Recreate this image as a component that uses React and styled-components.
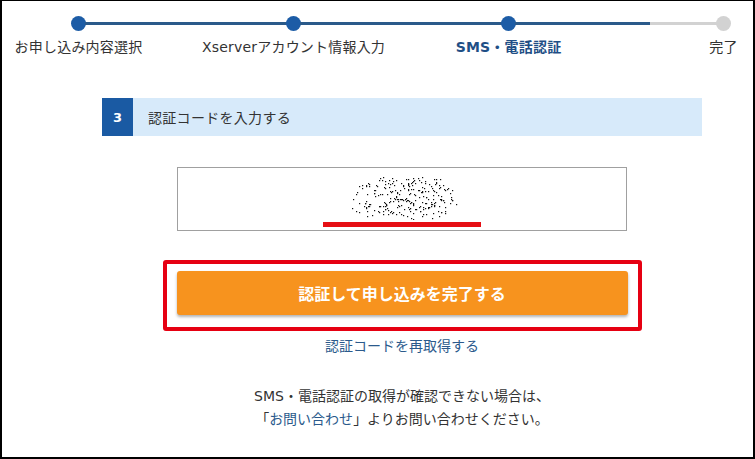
import React from "react";
import styled, { createGlobalStyle } from "styled-components";

const Global = createGlobalStyle`
  html, body { margin: 0; padding: 0; background: #fff; }
  body { font-family: "DejaVu Sans", "Noto Sans CJK JP", sans-serif; color: #333; }
  * { box-sizing: border-box; }
`;

const Frame = styled.div`
  width: 755px;
  height: 459px;
  border: 2px solid #000;
  border-top-width: 1px;
  border-left-width: 2px;
  background: #fff;
  overflow: hidden;
`;

const Stepper = styled.div`
  width: 660px;
  margin-left: 69px;
  padding-top: 15px;
`;

const Track = styled.div`
  display: flex;
  align-items: center;
  height: 15px;
`;

const Dot = styled.span`
  width: 15px;
  height: 15px;
  border-radius: 50%;
  flex: none;
  background: ${(p) => (p.$done ? "#1c5ca6" : "#d2d2d2")};
`;

const Segment = styled.span`
  flex: 1;
  height: 3px;
  margin: 0 -1px;
  background: ${(p) =>
    `linear-gradient(to right, #2a5a8a 0%, #2a5a8a ${p.$fill}%, #d2d2d2 ${p.$fill}%, #d2d2d2 100%)`};
`;

const Labels = styled.div`
  display: flex;
  justify-content: space-between;
  margin-top: 6px;
`;

const Label = styled.span`
  width: 15px;
  display: flex;
  justify-content: center;
  white-space: nowrap;
  font-size: 14px;
  line-height: 20px;
  letter-spacing: 0.2px;
  color: ${(p) => (p.$current ? "#1f4f86" : "#333")};
  font-weight: ${(p) => (p.$current ? 700 : 400)};
`;

const Content = styled.div`
  width: 600px;
  margin: 41px 0 0 100px;
  display: flex;
  flex-direction: column;
  align-items: center;
`;

const SectionHead = styled.div`
  width: 600px;
  height: 38px;
  display: flex;
  align-items: stretch;
  background: #d7eafa;
`;

const StepNo = styled.div`
  width: 31px;
  background: #1a5aa3;
  color: #fff;
  font-weight: 700;
  font-size: 13px;
  display: flex;
  align-items: center;
  justify-content: center;
`;

const HeadTitle = styled.div`
  display: flex;
  align-items: center;
  padding-left: 15px;
  font-size: 14px;
  letter-spacing: 0.3px;
  color: #333;
`;

const CodeField = styled.div`
  margin-top: 31px;
  width: 450px;
  height: 64px;
  border: 1px solid #a0a0a0;
  display: flex;
  flex-direction: column;
  align-items: center;
  padding-top: 8px;
`;

const Noise = styled.svg`
  display: block;
  margin-left: 10px;
`;

const Underline = styled.div`
  width: 158px;
  height: 5px;
  margin-top: 2px;
  background: #e60f14;
`;

const Highlight = styled.div`
  margin-top: 29px;
  width: 479px;
  height: 71px;
  border: 4px solid #e60012;
  border-radius: 3px;
  padding: 7px 10px 0;
`;

const SubmitButton = styled.button`
  width: 100%;
  height: 44px;
  border: none;
  border-radius: 3px;
  background: #f7931e;
  color: #fff;
  font-family: "Noto Sans CJK JP", sans-serif;
  font-weight: 700;
  font-size: 16px;
  box-shadow: 0 2px 3px rgba(0, 0, 0, 0.3);
  cursor: pointer;
`;

const ResendLink = styled.a`
  margin-top: 5px;
  font-size: 14px;
  line-height: 20px;
  color: #2b5a8c;
  text-decoration: none;
`;

const Note = styled.p`
  margin: 29px 0 0;
  text-align: center;
  font-size: 14px;
  line-height: 23px;
  color: #333;
`;

const NoteLink = styled.a`
  color: #2b5a8c;
  text-decoration: none;
`;

function makeDots() {
  let s = 98765;
  const rnd = () => {
    s = (s * 1103515245 + 12345) % 2147483648;
    return s / 2147483648;
  };
  const dots = [];
  let i = 0;
  while (dots.length < 260 && i < 8000) {
    i++;
    const x = rnd() * 110;
    const y = rnd() * 44;
    const dx = (x - 52) / 58;
    const dy = (y - 22) / 24;
    const d = dx * dx + dy * dy;
    if (d > 1) continue;
    if (rnd() < d * 0.7) continue;
    dots.push([Math.round(x), Math.round(y)]);
  }
  return dots;
}
const DOTS = makeDots();

const steps = [
  { label: "お申し込み内容選択", done: true },
  { label: "Xserverアカウント情報入力", done: true },
  { label: "SMS・電話認証", done: true, current: true },
  { label: "完了", done: false },
];
const fills = [100, 100, 67];

export default function App() {
  return (
    <>
      <Global />
      <Frame>
        <Stepper>
          <Track>
            {steps.map((s, i) => (
              <React.Fragment key={s.label}>
                <Dot $done={s.done} />
                {i < steps.length - 1 && <Segment $fill={fills[i]} />}
              </React.Fragment>
            ))}
          </Track>
          <Labels>
            {steps.map((s) => (
              <Label key={s.label} $current={s.current}>
                {s.label}
              </Label>
            ))}
          </Labels>
        </Stepper>
        <Content>
          <SectionHead>
            <StepNo>3</StepNo>
            <HeadTitle>認証コードを入力する</HeadTitle>
          </SectionHead>
          <CodeField>
            <Noise width="110" height="44" viewBox="0 0 110 44">
              {DOTS.map(([x, y], i) => (
                <rect key={i} x={x} y={y} width="1.2" height="1.2" fill="#111" />
              ))}
            </Noise>
            <Underline />
          </CodeField>
          <Highlight>
            <SubmitButton>認証して申し込みを完了する</SubmitButton>
          </Highlight>
          <ResendLink href="#">認証コードを再取得する</ResendLink>
          <Note>
            SMS・電話認証の取得が確認できない場合は、
            <br />
            「<NoteLink href="#">お問い合わせ</NoteLink>」よりお問い合わせください。
          </Note>
        </Content>
      </Frame>
    </>
  );
}
